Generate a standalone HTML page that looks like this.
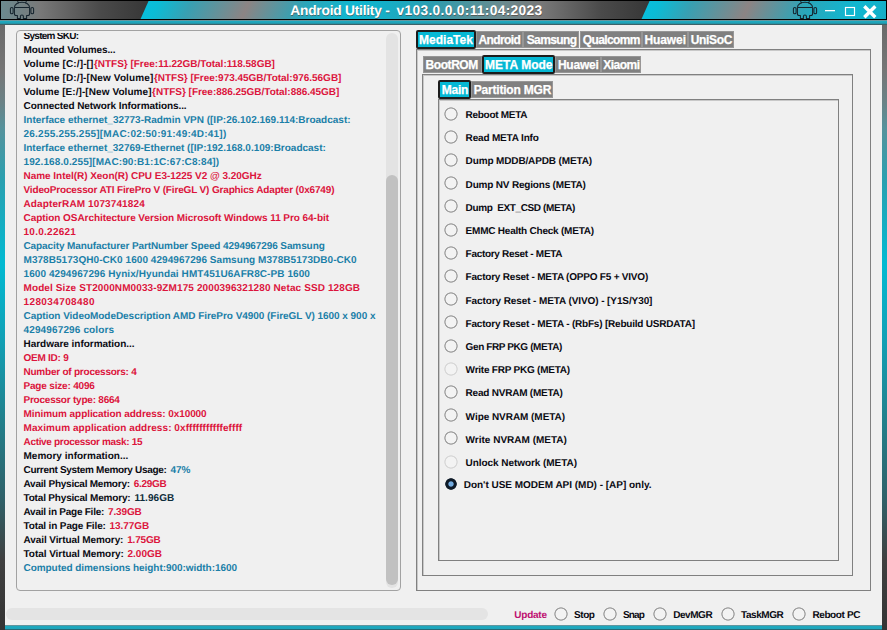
<!DOCTYPE html>
<html><head><meta charset="utf-8"><title>Android Utility</title>
<style>
*{box-sizing:border-box;margin:0;padding:0}
html,body{width:887px;height:630px;overflow:hidden;background:#f0f0f0}
body{font-family:"Liberation Sans",sans-serif;font-weight:bold;position:relative;text-rendering:geometricPrecision}
.abs{position:absolute}
.ln{position:absolute;white-space:nowrap;font-size:10px;line-height:14px;height:14px}
.tab{position:absolute;background:#808080;border:1px solid #969696}
.tab.sel{background:#05b8d4;border:2px solid #1c1c1c;border-radius:2px}
.tt{position:absolute;text-rendering:auto;color:#fff;-webkit-text-stroke:0.25px #fff;font-size:12px;line-height:14px;height:14px;white-space:nowrap}
.pane{position:absolute;border:1px solid #808080;box-shadow:inset 1px 1px 0 #c8c8c8}
.rb{position:absolute;width:14px;height:14px;margin:-0.5px 0 0 -0.5px;background:radial-gradient(circle at center,#f3f3f3 0,#f3f3f3 5.1px,#9c9c9c 5.8px,#9c9c9c 6.3px,rgba(156,156,156,0) 7px)}
.rb.dis{background:radial-gradient(circle at center,#f3f3f3 0,#f3f3f3 5.1px,#d6d6d6 5.8px,#d6d6d6 6.3px,rgba(214,214,214,0) 7px)}
.rb.on{margin:-1.3px 0 0 -1.3px;background:radial-gradient(circle at center,#72abe0 0,#72abe0 2.2px,#0e1a28 3.1px,#0e1a28 5.4px,rgba(14,26,40,0) 6.1px)}
.rl{position:absolute;white-space:nowrap;font-size:10px;line-height:14px;height:14px;color:#0a0a12}
</style></head><body>

<div class="abs" style="left:0;top:24px;width:5px;height:606px;background:linear-gradient(#6a6a6a 0px,#767676 46px,#6b8286 78px,#56929c 104px,#2aa0b0 156px,#02bad2 240px,#12a0b5 316px,#22808c 396px,#306068 476px,#404040 536px,#343434 606px)"></div>
<div class="abs" style="left:882px;top:24px;width:5px;height:606px;background:linear-gradient(#6a6a6a 0px,#767676 46px,#6b8286 78px,#56929c 104px,#2aa0b0 156px,#02bad2 240px,#12a0b5 316px,#22808c 396px,#306068 476px,#404040 536px,#343434 606px)"></div>
<div class="abs" style="left:5px;top:625px;width:877px;height:5px;background:linear-gradient(#8a8a8a 0px,#1fa9bf 1.3px,#1fa6bc 3.6px,#2c4a50 5px)"></div>
<svg class="abs" style="left:0;top:0" width="887" height="25" viewBox="0 0 887 25">
<defs>
<linearGradient id="gd" x1="0" x2="150" y1="0" y2="0" gradientUnits="userSpaceOnUse">
<stop offset="0" stop-color="#6b8b90"/><stop offset="0.27" stop-color="#787878"/><stop offset="0.67" stop-color="#4a4a4a"/><stop offset="1" stop-color="#363636"/></linearGradient>
<linearGradient id="gc" x1="149" x2="509" y1="0" y2="0" gradientUnits="userSpaceOnUse">
<stop offset="0" stop-color="#08bedb"/><stop offset="0.03" stop-color="#0bbcd6"/><stop offset="0.12" stop-color="#38a0b2"/><stop offset="0.28" stop-color="#8c8484"/><stop offset="0.44" stop-color="#2ba5b9"/><stop offset="0.58" stop-color="#10b7d0"/><stop offset="0.66" stop-color="#14afc8"/><stop offset="0.80" stop-color="#2f9cae"/><stop offset="0.90" stop-color="#4f939c"/><stop offset="1" stop-color="#6f8a8e"/></linearGradient>
<linearGradient id="gb" x1="0" x2="0" y1="20" y2="25" gradientUnits="userSpaceOnUse">
<stop offset="0" stop-color="#8c8c8c"/><stop offset="0.3" stop-color="#1fa9bf"/><stop offset="0.65" stop-color="#1f9fb4"/><stop offset="1" stop-color="#4a4a4a"/></linearGradient>
<g id="tile"><rect x="0" y="0" width="150" height="20" fill="url(#gd)"/><rect x="149" y="0" width="361" height="20" fill="url(#gc)" transform="skewX(-24)"/></g>
<g id="droid" fill="none" stroke="#15242e" stroke-width="1.05" stroke-linejoin="round">
<path d="M4.4 7.5 A7.6 5.3 0 0 1 19.6 7.5"/>
<path d="M8.7 3.1 L7.5 1.3 M15.3 3.1 L16.5 1.3"/>
<path d="M4.4 7.5 H19.6 M4.4 7.5 V13.4 Q4.4 15.5 6.2 15.5 H7.4 V18.5 H10.4 V16.5 Q10.4 15 11.9 15 Q13.4 15 13.4 16.5 V18.5 H16.6 V15.5 H17.8 Q19.6 15.5 19.6 13.4 V7.5"/>
<rect x="0.4" y="7.4" width="2.7" height="6.4" rx="1.35"/><rect x="20.9" y="7.4" width="2.7" height="6.4" rx="1.35"/>
</g>
</defs>
<use href="#tile"/><use href="#tile" x="501"/>
<rect x="0" y="20" width="887" height="5" fill="url(#gb)"/>
<rect x="0" y="0" width="887" height="1" fill="#000"/><rect x="0" y="19" width="887" height="1" fill="#000"/>
<rect x="0" y="0" width="1" height="20" fill="#000"/><rect x="886" y="0" width="1" height="20" fill="#000"/>
<use href="#droid" x="10" y="0"/><use href="#droid" x="793" y="0"/>
<rect x="825" y="10" width="10" height="1.3" fill="#fff"/>
<rect x="845.5" y="7.5" width="9" height="8" fill="none" stroke="#fff" stroke-width="1.15"/>
<path d="M864.3 6.2 L875.3 17.2 M875.3 6.2 L864.3 17.2" stroke="#fff" stroke-width="3.4" fill="none"/>
</svg>
<div class="abs" id="title" style="left:290.30px;top:2.50px;letter-spacing:-0.248px;color:#fff;height:16px;line-height:16px;font-size:13.8px;white-space:nowrap;text-shadow:0.5px 0.5px 0 rgba(70,45,30,.5);">Android Utility -</div>
<div class="abs" id="title2" style="left:396.50px;top:2.50px;letter-spacing:0.302px;color:#fff;height:16px;line-height:16px;font-size:13.8px;white-space:nowrap;text-shadow:0.5px 0.5px 0 rgba(70,45,30,.5);">v103.0.0.0:11:04:2023</div>
<div class="abs" style="left:16px;top:30px;width:385px;height:561px;border:1px solid #a2a2a2;border-radius:4px"></div>
<div class="abs" style="left:386px;top:33px;width:12px;height:555px;border-radius:6px;background:#e3e3e3"></div>
<div class="abs" style="left:386px;top:175px;width:12px;height:410px;border-radius:6px;background:#c1c1c1"></div>
<div class="abs" style="left:0;top:33px;width:386px;height:557px;overflow:hidden">
<div class="ln" id="l0_0" style="left:23.50px;top:-2.60px;letter-spacing:-0.714px;color:#0a0a12;">System SKU:</div>
<div class="ln" id="l1_0" style="left:23.50px;top:11.40px;letter-spacing:-0.097px;color:#0a0a12;">Mounted Volumes...</div>
<div class="ln" id="l2_0" style="left:23.50px;top:25.40px;letter-spacing:0.124px;color:#0a0a12;">Volume [C:/]-[]</div>
<div class="ln" id="l2_1" style="left:93.90px;top:25.40px;letter-spacing:-0.014px;color:#dc143c;">{NTFS} [Free:11.22GB/Total:118.58GB]</div>
<div class="ln" id="l3_0" style="left:23.50px;top:39.40px;letter-spacing:0.122px;color:#0a0a12;">Volume [D:/]-[New Volume]</div>
<div class="ln" id="l3_1" style="left:153.90px;top:39.40px;letter-spacing:-0.019px;color:#dc143c;">{NTFS} [Free:973.45GB/Total:976.56GB]</div>
<div class="ln" id="l4_0" style="left:23.50px;top:53.40px;letter-spacing:0.073px;color:#0a0a12;">Volume [E:/]-[New Volume]</div>
<div class="ln" id="l4_1" style="left:152.10px;top:53.40px;letter-spacing:-0.027px;color:#dc143c;">{NTFS} [Free:886.25GB/Total:886.45GB]</div>
<div class="ln" id="l5_0" style="left:23.50px;top:67.40px;letter-spacing:-0.077px;color:#0a0a12;">Connected Network Informations...</div>
<div class="ln" id="l6_0" style="left:23.50px;top:81.40px;letter-spacing:-0.005px;color:#1b7fa8;">Interface ethernet_32773-Radmin VPN ([IP:26.102.169.114:Broadcast:</div>
<div class="ln" id="l7_0" style="left:23.50px;top:95.40px;letter-spacing:0.231px;color:#1b7fa8;">26.255.255.255][MAC:02:50:91:49:4D:41])</div>
<div class="ln" id="l8_0" style="left:23.50px;top:109.40px;letter-spacing:-0.010px;color:#1b7fa8;">Interface ethernet_32769-Ethernet ([IP:192.168.0.109:Broadcast:</div>
<div class="ln" id="l9_0" style="left:23.50px;top:123.40px;letter-spacing:0.104px;color:#1b7fa8;">192.168.0.255][MAC:90:B1:1C:67:C8:84])</div>
<div class="ln" id="l10_0" style="left:23.50px;top:137.40px;letter-spacing:-0.037px;color:#dc143c;">Name Intel(R) Xeon(R) CPU E3-1225 V2 @ 3.20GHz</div>
<div class="ln" id="l11_0" style="left:23.50px;top:151.40px;letter-spacing:-0.157px;color:#dc143c;">VideoProcessor ATI FirePro V (FireGL V) Graphics Adapter (0x6749)</div>
<div class="ln" id="l12_0" style="left:23.50px;top:165.40px;letter-spacing:0.112px;color:#dc143c;">AdapterRAM 1073741824</div>
<div class="ln" id="l13_0" style="left:23.50px;top:179.40px;letter-spacing:-0.055px;color:#dc143c;">Caption OSArchitecture Version Microsoft Windows 11 Pro 64-bit</div>
<div class="ln" id="l14_0" style="left:23.50px;top:193.40px;letter-spacing:0.263px;color:#dc143c;">10.0.22621</div>
<div class="ln" id="l15_0" style="left:23.50px;top:207.40px;letter-spacing:-0.099px;color:#1b7fa8;">Capacity Manufacturer PartNumber Speed 4294967296 Samsung</div>
<div class="ln" id="l16_0" style="left:23.50px;top:221.40px;letter-spacing:0.053px;color:#1b7fa8;">M378B5173QH0-CK0 1600 4294967296 Samsung M378B5173DB0-CK0</div>
<div class="ln" id="l17_0" style="left:23.50px;top:235.40px;letter-spacing:0.081px;color:#1b7fa8;">1600 4294967296 Hynix/Hyundai HMT451U6AFR8C-PB 1600</div>
<div class="ln" id="l18_0" style="left:23.50px;top:249.40px;letter-spacing:0.108px;color:#dc143c;">Model Size ST2000NM0033-9ZM175 2000396321280 Netac SSD 128GB</div>
<div class="ln" id="l19_0" style="left:23.50px;top:263.40px;letter-spacing:0.391px;color:#dc143c;">128034708480</div>
<div class="ln" id="l20_0" style="left:23.50px;top:277.40px;letter-spacing:-0.043px;color:#1b7fa8;">Caption VideoModeDescription AMD FirePro V4900 (FireGL V) 1600 x 900 x</div>
<div class="ln" id="l21_0" style="left:23.50px;top:291.40px;letter-spacing:0.139px;color:#1b7fa8;">4294967296 colors</div>
<div class="ln" id="l22_0" style="left:23.50px;top:305.40px;letter-spacing:-0.031px;color:#0a0a12;">Hardware information...</div>
<div class="ln" id="l23_0" style="left:23.50px;top:319.40px;letter-spacing:-0.247px;color:#dc143c;">OEM ID: 9</div>
<div class="ln" id="l24_0" style="left:23.50px;top:333.40px;letter-spacing:-0.231px;color:#dc143c;">Number of processors: 4</div>
<div class="ln" id="l25_0" style="left:23.50px;top:347.40px;letter-spacing:-0.179px;color:#dc143c;">Page size: 4096</div>
<div class="ln" id="l26_0" style="left:23.50px;top:361.40px;letter-spacing:-0.221px;color:#dc143c;">Processor type: 8664</div>
<div class="ln" id="l27_0" style="left:23.50px;top:375.40px;letter-spacing:-0.070px;color:#dc143c;">Minimum application address: 0x10000</div>
<div class="ln" id="l28_0" style="left:23.50px;top:389.40px;letter-spacing:0.067px;color:#dc143c;">Maximum application address: 0xfffffffffffeffff</div>
<div class="ln" id="l29_0" style="left:23.50px;top:403.40px;letter-spacing:-0.322px;color:#dc143c;">Active processor mask: 15</div>
<div class="ln" id="l30_0" style="left:23.50px;top:417.40px;letter-spacing:0.015px;color:#0a0a12;">Memory information...</div>
<div class="ln" id="l31_0" style="left:23.50px;top:431.40px;letter-spacing:-0.309px;color:#0a0a12;">Current System Memory Usage:</div>
<div class="ln" id="l31_1" style="left:170.50px;top:431.40px;letter-spacing:-0.080px;color:#1b7fa8;">47%</div>
<div class="ln" id="l32_0" style="left:23.50px;top:445.40px;letter-spacing:-0.228px;color:#0a0a12;">Avail Physical Memory:</div>
<div class="ln" id="l32_1" style="left:133.70px;top:445.40px;letter-spacing:-0.273px;color:#dc143c;">6.29GB</div>
<div class="ln" id="l33_0" style="left:23.50px;top:459.40px;letter-spacing:-0.181px;color:#0a0a12;">Total Physical Memory:</div>
<div class="ln" id="l33_1" style="left:134.40px;top:459.40px;letter-spacing:0.062px;color:#0e2c3a;">11.96GB</div>
<div class="ln" id="l34_0" style="left:23.50px;top:473.40px;letter-spacing:-0.243px;color:#0a0a12;">Avail in Page File:</div>
<div class="ln" id="l34_1" style="left:108.00px;top:473.40px;letter-spacing:-0.127px;color:#dc143c;">7.39GB</div>
<div class="ln" id="l35_0" style="left:23.50px;top:487.40px;letter-spacing:-0.135px;color:#0a0a12;">Total in Page File:</div>
<div class="ln" id="l35_1" style="left:109.60px;top:487.40px;letter-spacing:-0.077px;color:#dc143c;">13.77GB</div>
<div class="ln" id="l36_0" style="left:23.50px;top:501.40px;letter-spacing:-0.088px;color:#0a0a12;">Avail Virtual Memory:</div>
<div class="ln" id="l36_1" style="left:127.20px;top:501.40px;letter-spacing:-0.164px;color:#dc143c;">1.75GB</div>
<div class="ln" id="l37_0" style="left:23.50px;top:515.40px;letter-spacing:-0.049px;color:#0a0a12;">Total Virtual Memory:</div>
<div class="ln" id="l37_1" style="left:127.60px;top:515.40px;letter-spacing:-0.036px;color:#dc143c;">2.00GB</div>
<div class="ln" id="l38_0" style="left:23.50px;top:529.40px;letter-spacing:-0.052px;color:#1b7fa8;">Computed dimensions height:900:width:1600</div>
</div>
<div class="abs" style="left:6px;top:608px;width:482px;height:12px;border-radius:6px;background:#e4e4e4"></div>
<div class="pane" style="left:416px;top:49px;width:455px;height:542px"></div>
<div class="pane" style="left:422px;top:74px;width:431px;height:502px"></div>
<div class="pane" style="left:438px;top:99px;width:401px;height:462px"></div>
<div class="tab sel" style="left:415.8px;top:30px;width:60.1px;height:19px"></div>
<div class="tt" id="t1_0" style="left:419.10px;top:33.20px;letter-spacing:0.000px;">MediaTek</div>
<div class="tab" style="left:475.5px;top:31px;width:47.1px;height:17px"></div>
<div class="tt" id="t1_1" style="left:478.40px;top:33.20px;letter-spacing:-0.585px;">Android</div>
<div class="tab" style="left:522.6px;top:31px;width:56.8px;height:17px"></div>
<div class="tt" id="t1_2" style="left:526.70px;top:33.20px;letter-spacing:-0.600px;">Samsung</div>
<div class="tab" style="left:580.1px;top:31px;width:61.9px;height:17px"></div>
<div class="tt" id="t1_3" style="left:582.80px;top:33.20px;letter-spacing:-0.640px;">Qualcomm</div>
<div class="tab" style="left:642px;top:31px;width:46.1px;height:17px"></div>
<div class="tt" id="t1_4" style="left:644.40px;top:33.20px;letter-spacing:-0.073px;">Huawei</div>
<div class="tab" style="left:688.1px;top:31px;width:45.6px;height:17px"></div>
<div class="tt" id="t1_5" style="left:690.70px;top:33.20px;letter-spacing:-0.309px;">UniSoC</div>
<div class="tab" style="left:422.6px;top:56px;width:59.8px;height:17.3px"></div>
<div class="tt" id="t2_0" style="left:425.60px;top:58.20px;letter-spacing:-0.446px;">BootROM</div>
<div class="tab sel" style="left:482.2px;top:55px;width:72.8px;height:19.3px"></div>
<div class="tt" id="t2_1" style="left:485.10px;top:58.20px;letter-spacing:0.012px;">META Mode</div>
<div class="tab" style="left:554.6px;top:56px;width:46.8px;height:17.3px"></div>
<div class="tt" id="t2_2" style="left:557.90px;top:58.20px;letter-spacing:-0.218px;">Huawei</div>
<div class="tab" style="left:601.4px;top:56px;width:39.8px;height:17.3px"></div>
<div class="tt" id="t2_3" style="left:603.30px;top:58.20px;letter-spacing:-0.509px;">Xiaomi</div>
<div class="tab sel" style="left:438.1px;top:80px;width:33px;height:19.2px"></div>
<div class="tt" id="t3_0" style="left:441.80px;top:83.20px;letter-spacing:-0.229px;">Main</div>
<div class="tab" style="left:470.7px;top:81px;width:82.8px;height:17.2px"></div>
<div class="tt" id="t3_1" style="left:473.80px;top:83.20px;letter-spacing:-0.208px;">Partition MGR</div>
<div class="rb" style="left:444.9px;top:107.0px"></div>
<div class="rl" id="r0" style="left:465.60px;top:108.90px;letter-spacing:-0.295px;">Reboot META</div>
<div class="rb" style="left:444.9px;top:130.2px"></div>
<div class="rl" id="r1" style="left:465.60px;top:132.10px;letter-spacing:-0.178px;">Read META Info</div>
<div class="rb" style="left:444.9px;top:153.4px"></div>
<div class="rl" id="r2" style="left:465.60px;top:155.30px;letter-spacing:-0.137px;">Dump MDDB/APDB (META)</div>
<div class="rb" style="left:444.9px;top:176.6px"></div>
<div class="rl" id="r3" style="left:465.60px;top:178.50px;letter-spacing:-0.186px;">Dump NV Regions (META)</div>
<div class="rb" style="left:444.9px;top:199.8px"></div>
<div class="rl" id="r4" style="left:465.60px;top:201.70px;letter-spacing:-0.385px;">Dump  EXT_CSD (META)</div>
<div class="rb" style="left:444.9px;top:223.0px"></div>
<div class="rl" id="r5" style="left:465.60px;top:224.90px;letter-spacing:-0.226px;">EMMC Health Check (META)</div>
<div class="rb" style="left:444.9px;top:246.2px"></div>
<div class="rl" id="r6" style="left:465.60px;top:248.10px;letter-spacing:-0.297px;">Factory Reset - META</div>
<div class="rb" style="left:444.9px;top:269.4px"></div>
<div class="rl" id="r7" style="left:465.60px;top:271.30px;letter-spacing:-0.214px;">Factory Reset - META (OPPO F5 + VIVO)</div>
<div class="rb" style="left:444.9px;top:292.6px"></div>
<div class="rl" id="r8" style="left:465.60px;top:294.50px;letter-spacing:-0.099px;">Factory Reset - META (VIVO) - [Y1S/Y30]</div>
<div class="rb" style="left:444.9px;top:315.8px"></div>
<div class="rl" id="r9" style="left:465.60px;top:317.70px;letter-spacing:-0.209px;">Factory Reset - META - (RbFs) [Rebuild USRDATA]</div>
<div class="rb" style="left:444.9px;top:339.0px"></div>
<div class="rl" id="r10" style="left:465.60px;top:340.90px;letter-spacing:-0.394px;">Gen FRP PKG (META)</div>
<div class="rb dis" style="left:444.9px;top:362.2px"></div>
<div class="rl" id="r11" style="left:465.60px;top:364.10px;letter-spacing:-0.226px;">Write FRP PKG (META)</div>
<div class="rb" style="left:444.9px;top:385.4px"></div>
<div class="rl" id="r12" style="left:465.60px;top:387.30px;letter-spacing:-0.224px;">Read NVRAM (META)</div>
<div class="rb" style="left:444.9px;top:408.6px"></div>
<div class="rl" id="r13" style="left:465.60px;top:410.50px;letter-spacing:-0.048px;">Wipe NVRAM (META)</div>
<div class="rb" style="left:444.9px;top:431.8px"></div>
<div class="rl" id="r14" style="left:465.60px;top:433.70px;letter-spacing:0.000px;">Write NVRAM (META)</div>
<div class="rb dis" style="left:444.9px;top:455.0px"></div>
<div class="rl" id="r15" style="left:465.60px;top:456.90px;letter-spacing:-0.059px;">Unlock Network (META)</div>
<div class="rb on" style="left:444.8px;top:478.0px"></div>
<div class="rl" id="r16" style="left:463.70px;top:478.90px;letter-spacing:-0.019px;">Don't USE MODEM API (MD) - [AP] only.</div>
<div class="rl" id="b0" style="left:514.30px;top:609.00px;letter-spacing:-0.236px;color:#be1070;">Update</div>
<div class="rb" style="left:554.2px;top:607.1px"></div>
<div class="rl" id="b1" style="left:574.00px;top:609.00px;letter-spacing:-0.429px;color:#0a0a12;">Stop</div>
<div class="rb" style="left:603.2px;top:607.1px"></div>
<div class="rl" id="b2" style="left:622.90px;top:609.00px;letter-spacing:-0.857px;color:#0a0a12;">Snap</div>
<div class="rb" style="left:653.2px;top:607.1px"></div>
<div class="rl" id="b3" style="left:673.20px;top:609.00px;letter-spacing:-0.436px;color:#0a0a12;">DevMGR</div>
<div class="rb" style="left:721.4px;top:607.1px"></div>
<div class="rl" id="b4" style="left:741.10px;top:609.00px;letter-spacing:-0.462px;color:#0a0a12;">TaskMGR</div>
<div class="rb" style="left:792.0px;top:607.1px"></div>
<div class="rl" id="b5" style="left:812.40px;top:609.00px;letter-spacing:-0.388px;color:#0a0a12;">Reboot PC</div>
</body></html>
